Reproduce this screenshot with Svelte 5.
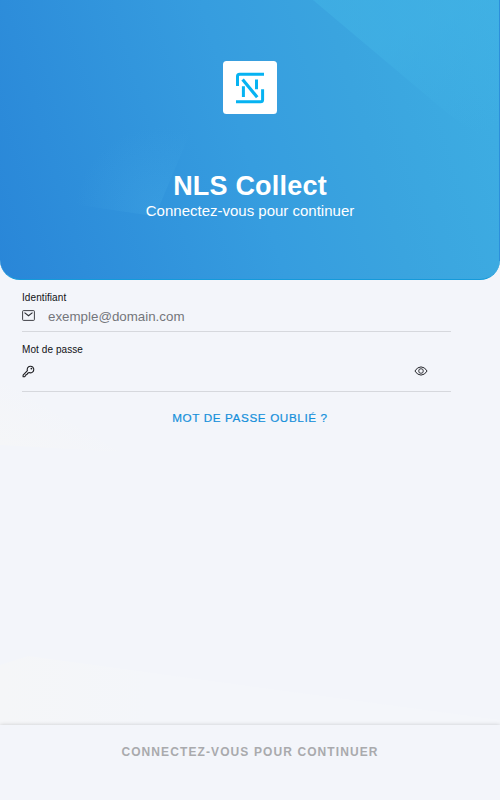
<script lang="ts">
	/**
	 * Login screen for NLS Collect
	 */

	let email = $state('');
	let password = $state('');
	let showPassword = $state(false);
</script>

<main class="login">
	<header class="hero">
		<svg class="facets" viewBox="0 0 500 280" preserveAspectRatio="none" aria-hidden="true">
			<defs>
				<linearGradient id="facet-right" gradientUnits="userSpaceOnUse" x1="410" y1="30" x2="460" y2="145">
					<stop offset="0" stop-color="#41b2e5" stop-opacity="0.6" />
					<stop offset="1" stop-color="#41b2e5" stop-opacity="0" />
				</linearGradient>
				<radialGradient id="facet-left" gradientUnits="userSpaceOnUse" cx="160" cy="212" r="85">
					<stop offset="0" stop-color="#4aaee8" stop-opacity="0.26" />
					<stop offset="1" stop-color="#4aaee8" stop-opacity="0" />
				</radialGradient>
			</defs>
			<path d="M313 0H500V150L449 115Z" fill="url(#facet-right)" />
			<path d="M40 200L155 217L200 110L60 110Z" fill="url(#facet-left)" />
			<path d="M499.5 0V262" stroke="#2c8fdb" stroke-width="1" />
		</svg>

		<div class="logo">
			<svg width="30" height="32" viewBox="0 0 30 32" fill="none" stroke="#06b3f2" stroke-width="3">
				<path d="M2.5 14V4.3Q2.5 2.2 4.6 2.2H29" />
				<path d="M27.6 17.3V27.7Q27.6 29.7 25.5 29.7H1" />
				<path d="M8.4 14.2V25M21.5 7.5V17.3" />
				<path d="M7.6 7.6L22.2 25.2" stroke-width="3.2" />
			</svg>
		</div>
		<h1>NLS Collect</h1>
		<p>Connectez-vous pour continuer</p>
	</header>

	<section class="form">
		<svg class="backdrop" viewBox="0 0 500 445" preserveAspectRatio="none" aria-hidden="true">
			<defs>
				<linearGradient id="glow-top" gradientUnits="userSpaceOnUse" x1="0" y1="165" x2="30" y2="110">
					<stop offset="0" stop-color="#f5f6f8" />
					<stop offset="1" stop-color="#f3f5fa" />
				</linearGradient>
				<linearGradient id="glow" x1="0" y1="0" x2="1" y2="0">
					<stop offset="0" stop-color="#f5f6f8" />
					<stop offset="0.3" stop-color="#f4f6fa" />
					<stop offset="1" stop-color="#f4f6fa" />
				</linearGradient>
			</defs>
			<path d="M0 100V165L120 172Z" fill="url(#glow-top)" />
			<path d="M0 385L28 376L500 440V445H0Z" fill="url(#glow)" />
		</svg>

		<div class="field email">
			<label for="email">Identifiant</label>
			<div class="row">
				<svg width="13" height="11" viewBox="0 0 13 11" fill="none" stroke="#2b2d32">
					<rect x="0.6" y="0.6" width="11.8" height="9.8" rx="0.8" stroke-width="0.9" />
					<path d="M2.5 2.6L6.5 5.8L10.5 2.6" stroke-width="1.1" />
				</svg>
				<input id="email" type="email" placeholder="exemple@domain.com" bind:value={email} />
			</div>
		</div>

		<div class="field password">
			<label for="password">Mot de passe</label>
			<div class="row">
				<svg width="13" height="13" viewBox="0 0 13 13" fill="none" stroke="#1c1d21">
					<path
						d="M5.4 5.7A3.3 3.3 0 1 1 7.3 7.6L6.3 7.9L5.6 8.2L5.2 9.2L4.1 9.6L3.6 10.7L2.5 11.8H1.1V10.2Z"
						stroke-width="1.1"
						stroke-linejoin="round"
					/>
					<circle cx="9.4" cy="3.6" r="0.9" fill="#1c1d21" stroke="none" />
				</svg>
				<input id="password" type={showPassword ? 'text' : 'password'} bind:value={password} />
				<button
					class="toggle"
					type="button"
					aria-label="Afficher"
					onclick={() => (showPassword = !showPassword)}
				>
					<svg width="14" height="10" viewBox="0 0 14 10" fill="none" stroke="#24252a">
						<path d="M0.9 5Q3.3 0.9 7 0.9T13.1 5Q10.7 9.1 7 9.1T0.9 5Z" />
						<circle cx="7" cy="5" r="2.3" stroke-width="0.9" />
					</svg>
				</button>
			</div>
		</div>

		<button class="forgot" type="button">MOT DE PASSE OUBLIÉ ?</button>
	</section>

	<footer>
		<button class="submit" type="button" disabled={!email || !password}>
			CONNECTEZ-VOUS POUR CONTINUER
		</button>
	</footer>
</main>

<style>
	:global(body) {
		background: #f3f5fa;
	}

	.login {
		display: flex;
		flex-direction: column;
		height: 800px;
		font-family: 'Liberation Sans', Arial, sans-serif;
		background: #f3f5fa;
	}

	button,
	input {
		padding: 0;
		border: none;
		background: none;
		font-family: inherit;
	}

	svg {
		display: block;
		flex-shrink: 0;
	}

	.hero {
		position: relative;
		display: flex;
		flex-direction: column;
		align-items: center;
		box-sizing: border-box;
		height: 280px;
		padding-top: 61px;
		border-radius: 0 0 20px 20px;
		border-bottom: 1px solid #159ada;
		overflow: hidden;
		color: #fff;
		background: linear-gradient(73deg, #2986d8 0%, #369ddf 49%, #3aa4df 70%, #3eafe3 100%);
	}

	.facets,
	.backdrop {
		position: absolute;
		inset: 0;
		width: 100%;
		height: 100%;
	}

	.logo {
		position: relative;
		display: flex;
		align-items: center;
		justify-content: center;
		width: 54px;
		height: 53px;
		border-radius: 3.5px;
		background: #fff;
	}

	h1 {
		position: relative;
		margin: 56px 0 0;
		font-size: 27px;
		line-height: 32px;
		font-weight: 700;
		letter-spacing: 0.2px;
	}

	.hero p {
		position: relative;
		margin: 0;
		font-size: 15px;
		line-height: 18px;
	}

	.form {
		position: relative;
		flex: 1;
		display: flex;
		flex-direction: column;
	}

	.field {
		position: relative;
		box-sizing: border-box;
		width: 429px;
		margin-left: 22px;
		border-bottom: 1px solid #d6d8dd;
	}

	.email {
		height: 52px;
		padding-top: 12px;
	}

	.password {
		height: 60px;
		padding-top: 12px;
	}

	label {
		display: block;
		font-size: 10px;
		line-height: 12px;
		letter-spacing: 0.08px;
		color: #101114;
	}

	.row {
		display: flex;
		align-items: center;
		height: 22px;
	}

	.password .row {
		height: 30px;
	}

	input {
		flex: 1;
		min-width: 0;
		margin-left: 13px;
		font-size: 13.33px;
		outline: none;
		color: #222;
	}

	.email input {
		padding-top: 3px;
	}

	input::placeholder {
		color: #74767b;
		opacity: 1;
	}

	.toggle {
		margin-right: 23px;
		cursor: pointer;
	}

	.forgot {
		position: relative;
		align-self: center;
		margin-top: 19px;
		font-size: 11.7px;
		line-height: 14px;
		letter-spacing: 0.62px;
		color: #1590da;
		-webkit-text-stroke: 0.2px #1590da;
		cursor: pointer;
	}

	footer {
		position: relative;
		display: flex;
		justify-content: center;
		align-items: flex-start;
		height: 75px;
		background: #f3f5fa;
		box-shadow: 0 0 4px rgba(0, 0, 0, 0.18);
	}

	.submit {
		margin-top: 20px;
		font-size: 12px;
		line-height: 14px;
		font-weight: 700;
		letter-spacing: 1.1px;
		color: #a9aaad;
	}
</style>
